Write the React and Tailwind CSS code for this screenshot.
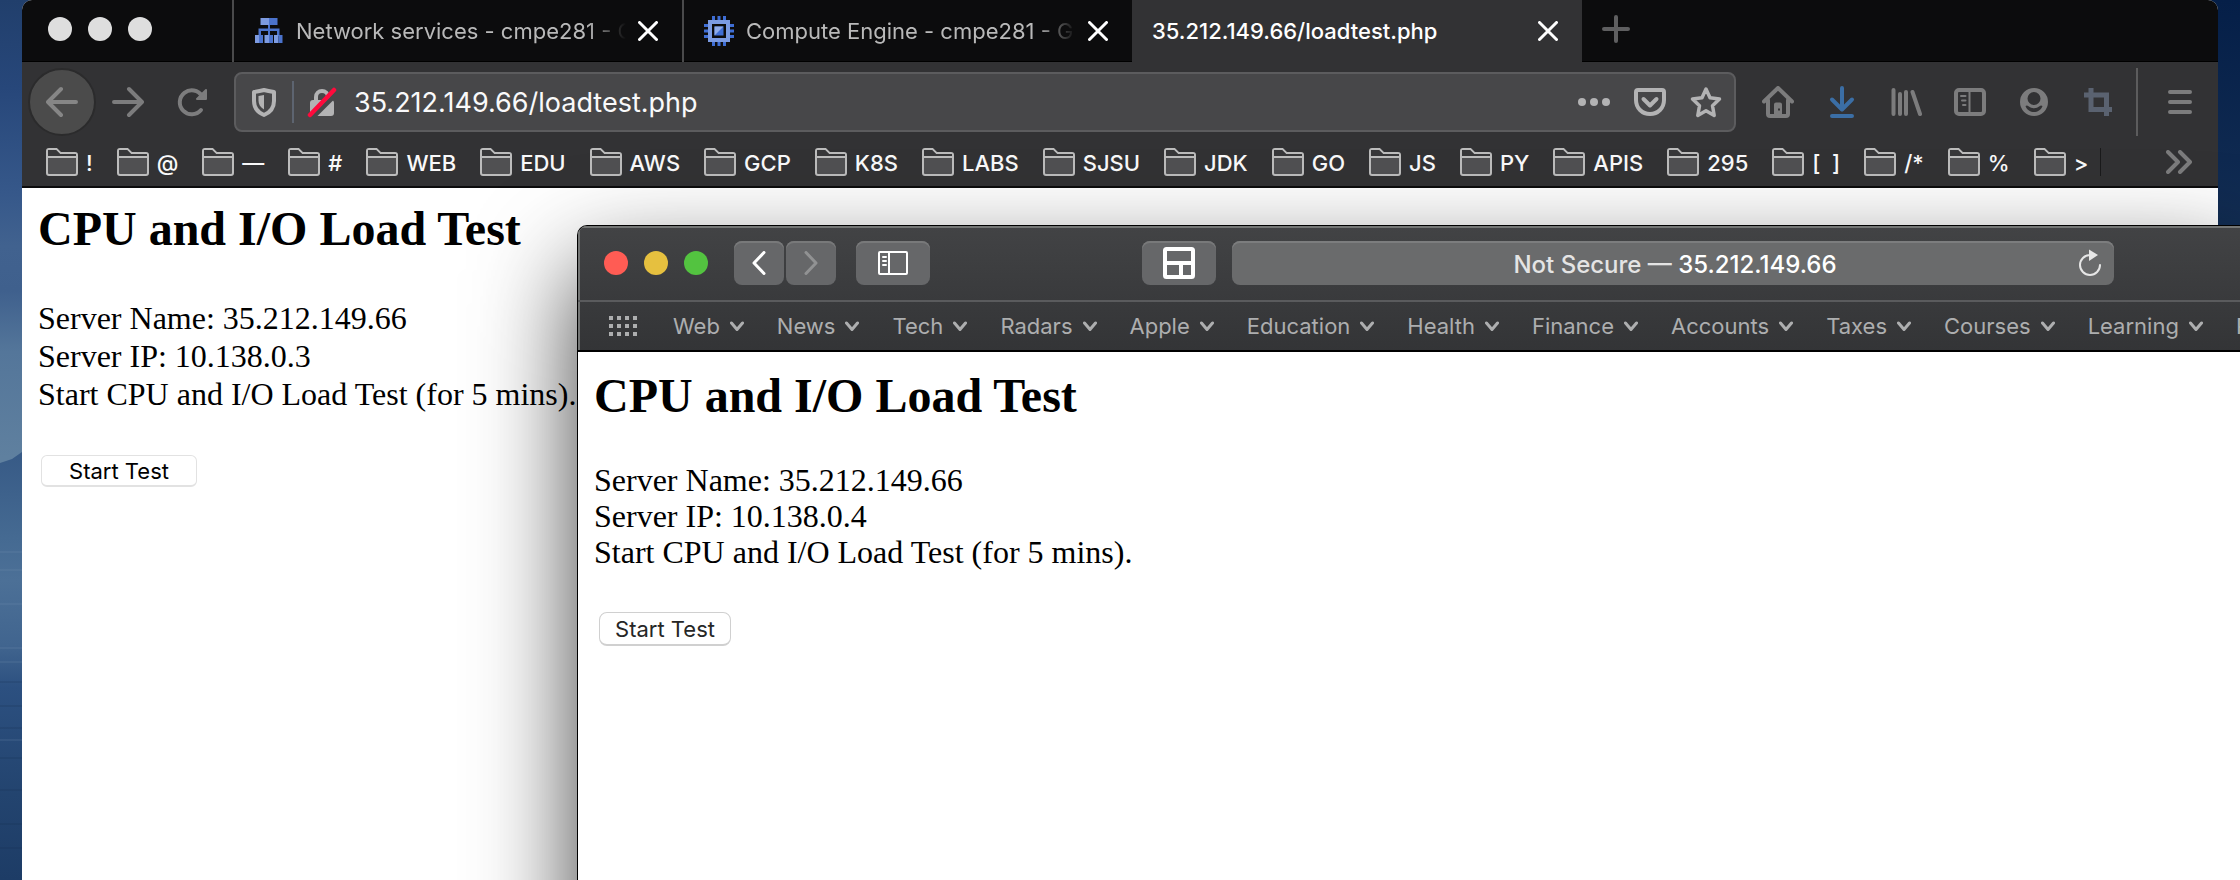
const bookmarks = [
  "!", "@", "—", "#", "WEB", "EDU", "AWS", "GCP", "K8S", "LABS", "SJSU", "JDK", "GO",
  "JS", "PY", "APIS", "295", "[\u00a0\u00a0]", "/*", "%", ">",
];

const favorites = [
  "Web", "News", "Tech", "Radars", "Apple", "Education", "Health", "Finance",
  "Accounts", "Taxes", "Courses", "Learning", "R",
];

const round = { fill: "none", stroke: "currentColor", strokeLinecap: "round", strokeLinejoin: "round" };

function Icon({ children, className = "", ...rest }) {
  return (
    <svg viewBox="0 0 32 32" className={`size-8 shrink-0 ${className}`} aria-hidden="true" {...rest}>
      {children}
    </svg>
  );
}

function IconButton({ label, className = "", children }) {
  return (
    <button type="button" aria-label={label} className={`flex shrink-0 items-center justify-center ${className}`}>
      {children}
    </button>
  );
}

function NetworkIcon() {
  return (
    <svg viewBox="0 0 28 26" className="h-[26px] w-[30px] shrink-0" aria-hidden="true">
      <path d="M5.500 0H14v7H5.500z" fill="#7d9be0" />
      <path d="M14 0h8.500v7H14z" fill="#4b73cc" />
      <path d="M13 7h2v3.500h9.500V18H22v-5h-7v5h-2v-5H6v5H3.500v-7.500H13z" fill="#4b73cc" />
      <path d="M0 17h4v8H0zM9.500 17h4.500v8H9.500zM19 17h4.500v8H19z" fill="#7d9be0" />
      <path d="M4 17h4v8H4zM14 17h4v8h-4zM23.500 17h4v8h-4z" fill="#4b73cc" />
    </svg>
  );
}

function ChipIcon() {
  return (
    <svg viewBox="0 0 30 30" className="size-[30px] shrink-0" aria-hidden="true">
      <path d="M8 0h3v5H8zM13.500 0h3v5h-3zM19 0h3v5h-3zM8 25h3v5H8zM13.500 25h3v5h-3zM19 25h3v5h-3z" fill="#3f6ed4" />
      <path d="M0 8h5v3H0zM0 13.500h5v3H0zM0 19h5v3H0zM25 8h5v3h-5zM25 13.500h5v3h-5zM25 19h5v3h-5z" fill="#3f6ed4" />
      <path d="M4 4h22v22H4zM8 8v14h14V8z" fill="#7b9be2" fillRule="evenodd" />
      <path d="M10.500 10.500h9v9h-9z" fill="#3f6ed4" />
      <path d="M10.500 10.500h9l-9 9z" fill="#8fabe8" />
    </svg>
  );
}

function CloseIcon() {
  return (
    <svg viewBox="0 0 20 20" className="size-5" {...round} strokeWidth="3" aria-hidden="true">
      <path d="M1.500 1.500l17 17M18.500 1.500l-17 17" />
    </svg>
  );
}

function FolderIcon() {
  return (
    <svg viewBox="0 0 32 28" className="h-7 w-8 shrink-0" aria-hidden="true">
      <path
        d="M1 25V3a2 2 0 0 1 2-2h7.500l4 4H29a2 2 0 0 1 2 2v18a2 2 0 0 1-2 2H3a2 2 0 0 1-2-2z"
        fill="#505052"
        stroke="#bcbcbc"
        strokeWidth="2"
      />
      <path d="M2 2h8l4 4h16v3H2z" fill="#38383a" />
      <path d="M1 9h30" stroke="#bcbcbc" strokeWidth="2" />
    </svg>
  );
}

function Tab({ icon, title, active }) {
  return (
    <div
      className={
        active
          ? "flex w-[450px] items-center bg-[#323234] pr-6 pl-5 text-white"
          : "flex w-[450px] items-center gap-3 border-l-2 border-[#4a4a4b] pr-6 pl-5 text-[#b9b9b9]"
      }
    >
      {icon}
      <span
        className={
          active
            ? "flex-1 overflow-hidden whitespace-nowrap font-medium"
            : "flex-1 overflow-hidden whitespace-nowrap [mask-image:linear-gradient(to_right,#000_88%,transparent)]"
        }
      >
        {title}
      </span>
      <IconButton label="Close tab" className="text-white">
        <CloseIcon />
      </IconButton>
    </div>
  );
}

function Wallpaper() {
  return (
    <svg
      viewBox="0 0 2240 880"
      preserveAspectRatio="none"
      className="absolute inset-0 size-full"
      aria-hidden="true"
    >
      <defs>
        <linearGradient id="sky" x1="0" y1="0" x2="0" y2="1">
          <stop offset="0" stopColor="#213f6c" />
          <stop offset="0.1" stopColor="#27477a" />
          <stop offset="0.22" stopColor="#36588a" />
          <stop offset="0.28" stopColor="#41628f" />
          <stop offset="0.33" stopColor="#3f608d" />
          <stop offset="0.4" stopColor="#54769a" />
          <stop offset="0.52" stopColor="#5f809f" />
        </linearGradient>
        <linearGradient id="sea" x1="0" y1="0" x2="0" y2="1">
          <stop offset="0" stopColor="#375a86" />
          <stop offset="0.2" stopColor="#456a92" />
          <stop offset="0.3" stopColor="#4c7097" />
          <stop offset="0.45" stopColor="#41658f" />
          <stop offset="0.55" stopColor="#2c5080" />
          <stop offset="0.8" stopColor="#23446f" />
          <stop offset="1" stopColor="#1d3c66" />
        </linearGradient>
        <linearGradient id="dusk" x1="0" y1="0" x2="0" y2="1">
          <stop offset="0" stopColor="#051f48" />
          <stop offset="1" stopColor="#132e54" />
        </linearGradient>
      </defs>
      <rect width="1120" height="880" fill="url(#sky)" />
      <path d="M0 463L12 459L22 452H1120V880H0z" fill="url(#sea)" />
      <rect x="1120" width="1120" height="240" fill="url(#dusk)" />
      <g stroke="#7c9cb8" strokeOpacity="0.14" strokeWidth="2">
        <path d="M0 552h22M0 570h22M0 604h22M0 648h22M0 662h22M0 740h22" />
      </g>
      <g stroke="#11294b" strokeOpacity="0.16" strokeWidth="2">
        <path d="M0 682h22M0 706h22M0 728h22M0 758h22M0 790h22M0 824h22M0 848h22" />
      </g>
    </svg>
  );
}

function FirefoxWindow() {
  return (
    <section className="relative mx-[22px] flex flex-1 flex-col overflow-hidden rounded-t-[10px] bg-white">
      <div className="flex h-[62px] bg-[#0c0c0d] text-[22px] leading-7 shadow-[inset_0_-1px_0_#000]">
        <div className="flex w-[210px] items-center gap-4 pb-1 pl-[26px]">
          <button type="button" aria-label="Close" className="size-6 rounded-full bg-[#dedede]" />
          <button type="button" aria-label="Minimize" className="size-6 rounded-full bg-[#dedede]" />
          <button type="button" aria-label="Zoom" className="size-6 rounded-full bg-[#dedede]" />
        </div>
        <Tab icon={<NetworkIcon />} title="Network services - cmpe281 - G" />
        <Tab icon={<ChipIcon />} title="Compute Engine - cmpe281 - G" />
        <Tab title="35.212.149.66/loadtest.php" active />
        <IconButton label="New tab" className="pb-1 pl-5 text-[#5f5f60]">
          <svg viewBox="0 0 28 28" className="size-7" {...round} strokeWidth="4" aria-hidden="true">
            <path d="M14 2v24M2 14h24" />
          </svg>
        </IconButton>
      </div>

      <div className="flex h-20 items-center bg-[#323234] pr-[22px] pl-1.5 text-[#7c7c7d]">
        <IconButton label="Back" className="size-[68px] rounded-full border-2 border-[#2b2b2c] bg-[#4b4b4b] text-[#868686]">
          <Icon {...round} strokeWidth="4">
            <path d="M30 16H3M15 3L2 16l13 13" />
          </Icon>
        </IconButton>
        <IconButton label="Forward" className="ml-4">
          <Icon {...round} strokeWidth="4">
            <path d="M2 16h27M17 3l13 13-13 13" />
          </Icon>
        </IconButton>
        <IconButton label="Reload" className="ml-8">
          <Icon {...round} strokeWidth="4">
            <path d="M25 24a12 12 0 1 1 1-14" />
            <path d="M30 4v9h-9z" fill="currentColor" strokeWidth="2" />
          </Icon>
        </IconButton>

        <div className="ml-[26px] flex h-[60px] flex-1 items-center rounded-lg border-2 border-[#5c5c5e] bg-[#474749] px-3 text-[#b3b3b4]">
          <IconButton label="Tracking protection">
            <Icon>
              <path
                d="M16 4c4 1 7 1.500 10 2v9c0 7-4 11.500-10 14C10 26.500 6 22 6 15V6c3-.5 6-1 10-2z"
                fill="none"
                stroke="currentColor"
                strokeWidth="4"
                strokeLinejoin="round"
              />
              <path d="M16 9v14.500c-4-2.500-5.500-5.500-5.500-9V10z" fill="currentColor" />
            </Icon>
          </IconButton>
          <span className="ml-3 h-[42px] w-0.5 bg-[#5d6470]" />
          <IconButton label="Connection not secure" className="ml-3">
            <Icon>
              <path d="M10 15v-4a6 6 0 0 1 12 0v4" fill="none" stroke="currentColor" strokeWidth="4" />
              <rect x="4" y="14" width="24" height="16" rx="3" fill="currentColor" />
              <path d="M7 31L31 7" stroke="#474749" strokeWidth="5" />
              <path d="M4 29L28 4" stroke="#ff0a3c" strokeWidth="4.500" strokeLinecap="round" />
            </Icon>
          </IconButton>
          <input
            type="text"
            aria-label="Address"
            defaultValue="35.212.149.66/loadtest.php"
            className="ml-4 min-w-0 flex-1 bg-transparent pt-0.5 text-[27px] leading-8 text-[#f9f9fa] outline-none"
          />
          <div className="flex gap-6">
            <IconButton label="Page actions">
              <Icon fill="currentColor">
                <circle cx="4" cy="16" r="4" />
                <circle cx="16" cy="16" r="4" />
                <circle cx="28" cy="16" r="4" />
              </Icon>
            </IconButton>
            <IconButton label="Save to Pocket">
              <Icon {...round} strokeWidth="4">
                <path d="M4 4h24a2 2 0 0 1 2 2v8c0 8-6 14-14 14S2 22 2 14V6a2 2 0 0 1 2-2z" />
                <path d="M9.500 13l6.500 6.500 6.500-6.500" />
              </Icon>
            </IconButton>
            <IconButton label="Bookmark this page">
              <Icon {...round} strokeWidth="3.500">
                <path d="M16 3l4 8.800 9.500 1.200-7 6.700 1.700 9.800L16 24.800 7.800 29.500l1.700-9.800-7-6.700L12 11.800z" />
              </Icon>
            </IconButton>
          </div>
        </div>

        <div className="ml-[26px] flex items-center gap-8">
          <IconButton label="Home">
            <Icon {...round} strokeWidth="4">
              <path d="M2 15.500L16 2l14 13.500" />
              <path d="M6 14v14a2 2 0 0 0 2 2h16a2 2 0 0 0 2-2V14" />
              <path
                d="M12 30V18.500a2 2 0 0 1 2-2h4a2 2 0 0 1 2 2V30zM16 22.500v2h2v-2z"
                fill="currentColor"
                fillRule="evenodd"
                stroke="none"
              />
            </Icon>
          </IconButton>
          <IconButton label="Downloads" className="text-[#3b6ea5]">
            <Icon {...round} strokeWidth="4">
              <path d="M16 2v20M6 13.500L16 23.500l10-10M6 30h20" />
            </Icon>
          </IconButton>
          <IconButton label="Library">
            <Icon {...round} strokeWidth="4">
              <path d="M3.500 4v24M10 8v20M16 6v22M22.500 6L30 28" />
            </Icon>
          </IconButton>
          <IconButton label="Sidebars">
            <Icon {...round} strokeWidth="4">
              <rect x="2" y="4" width="28" height="24" rx="3" />
              <path d="M15.500 5v22" strokeWidth="2" />
              <path d="M7 10h4.500M8 14.500h3.500M9 19h2.500" strokeWidth="2" />
            </Icon>
          </IconButton>
          <IconButton label="Account">
            <Icon>
              <path
                fill="currentColor"
                fillRule="evenodd"
                d="M16 2a14 14 0 1 0 0 28a14 14 0 1 0 0-28zM16 6a6.500 6.500 0 0 1 0 13a6.500 6.500 0 0 1 0-13zM7.500 20c1-.8 2-.7 3 .2 3 2.600 8 2.600 11 0 1-.9 2-1 3-.2-1.500 4-5 6-8.500 6s-7-2-8.500-6z"
              />
            </Icon>
          </IconButton>
          <IconButton label="Screenshot" className="text-[#5a6270]">
            <Icon fill="none" stroke="currentColor" strokeWidth="5">
              <path d="M2 9h22.500v21M9 2v21.500h21" />
            </Icon>
          </IconButton>
        </div>
        <span className="ml-[22px] h-[68px] w-0.5 bg-[#5c5c5d]" />
        <IconButton label="Open menu" className="ml-[26px]">
          <Icon {...round} strokeWidth="4">
            <path d="M6 6h20M6 16h20M6 26h20" />
          </Icon>
        </IconButton>
      </div>

      <nav className="flex h-[46px] items-center border-b-2 border-[#0c0c0d] bg-[#323234] pr-[26px] pb-1 pl-6">
        <ul className="flex gap-6">
          {bookmarks.map((name) => (
            <li key={name}>
              <a href="#" className="flex items-center gap-2 text-[22px] leading-7 font-medium whitespace-nowrap text-[#f9f9fa]">
                <FolderIcon />
                <span className="pt-0.5">{name}</span>
              </a>
            </li>
          ))}
        </ul>
        <span className="ml-3 h-7 w-px bg-[#1a1a1b]" />
        <IconButton label="More bookmarks" className="ml-auto text-[#7c7c7d]">
          <svg viewBox="0 0 26 24" className="h-6 w-[26px]" {...round} strokeWidth="4" aria-hidden="true">
            <path d="M2 2l10 10L2 22M14 2l10 10-10 10" />
          </svg>
        </IconButton>
      </nav>

      <article className="px-4 pt-[13px] font-['Liberation_Serif',serif] text-[32px] leading-[38px] text-black">
        <h2 className="mb-[42px] text-5xl leading-[56px] font-bold">CPU and I/O Load Test</h2>
        <p>Server Name: 35.212.149.66</p>
        <p>Server IP: 10.138.0.3</p>
        <p>Start CPU and I/O Load Test (for 5 mins).</p>
        <button
          type="button"
          className="mt-[42px] ml-[3px] flex h-8 w-[156px] items-center justify-center rounded-md border border-b-2 border-[#e2e2e2] bg-white font-['Inter',sans-serif] text-[22px] leading-7"
        >
          Start Test
        </button>
      </article>
    </section>
  );
}

const safariButton =
  "flex h-11 shrink-0 items-center justify-center rounded-lg bg-[#666769] shadow-[inset_0_2px_0_#78797a]";

function SafariWindow() {
  return (
    <section className="absolute top-[225px] right-0 -bottom-[200px] left-[577px] flex flex-col overflow-hidden rounded-tl-[10px] border-t border-l border-black bg-white shadow-[0_44px_100px_rgba(0,0,0,0.75)]">
      <div className="bg-linear-to-b from-[#424345] to-[#333436] shadow-[inset_2px_2px_0_#747675]">
        <div className="flex h-[76px] items-center border-b-2 border-[#5a5b5d] pr-[126px] pl-[26px]">
          <div className="flex gap-4">
            <button type="button" aria-label="Close" className="size-6 rounded-full bg-[#ff5c54]" />
            <button type="button" aria-label="Minimize" className="size-6 rounded-full bg-[#e6c03f]" />
            <button type="button" aria-label="Zoom" className="size-6 rounded-full bg-[#53c340]" />
          </div>
          <div className="ml-[26px] flex gap-0.5">
            <button type="button" aria-label="Back" className={`${safariButton} w-[50px] text-white`}>
              <svg viewBox="0 0 14 24" className="h-6 w-3.5" {...round} strokeWidth="3" aria-hidden="true">
                <path d="M12 1.500L2 12l10 10.500" />
              </svg>
            </button>
            <button type="button" aria-label="Forward" className={`${safariButton} w-[50px] text-[#919293]`}>
              <svg viewBox="0 0 14 24" className="h-6 w-3.5" {...round} strokeWidth="3" aria-hidden="true">
                <path d="M2 1.500L12 12 2 22.500" />
              </svg>
            </button>
          </div>
          <button type="button" aria-label="Show sidebar" className={`${safariButton} ml-5 w-[74px] text-white`}>
            <svg viewBox="0 0 30 24" className="h-6 w-[30px]" {...round} strokeWidth="2" aria-hidden="true">
              <rect x="1" y="1" width="28" height="22" rx="1" />
              <path d="M11 1v22M5 6h3M5 10h3M5 14h3" />
            </svg>
          </button>
          <button type="button" aria-label="Layout extension" className={`${safariButton} ml-[212px] w-[74px] text-white`}>
            <svg viewBox="0 0 32 32" className="size-8" {...round} strokeWidth="4" aria-hidden="true">
              <rect x="2" y="2" width="28" height="28" rx="1.500" />
              <path d="M2 16h28M18 16v14" />
            </svg>
          </button>
          <div className="ml-4 flex h-11 flex-1 items-center rounded-lg bg-[#6a6b6c] pr-3 pl-10 shadow-[inset_0_2px_0_#7c7d7e]">
            <p className="flex-1 pt-1 text-center text-2xl leading-8 font-medium text-[#e4e4e4]">
              Not Secure — <span className="text-white">35.212.149.66</span>
            </p>
            <IconButton label="Reload page" className="text-[#e6e6e6]">
              <svg viewBox="0 0 24 28" className="h-7 w-6" aria-hidden="true">
                <path d="M12 6a10 10 0 1 0 10 10" fill="none" stroke="currentColor" strokeWidth="2" strokeLinecap="round" />
                <path d="M11 0.500l9 5.500-9 6z" fill="currentColor" />
              </svg>
            </IconButton>
          </div>
        </div>
        <nav className="flex h-[50px] items-center gap-[33px] border-b-2 border-black pl-[31px] text-[#adaeaf]">
          <IconButton label="Show favorites" className="mr-[3px]">
            <svg viewBox="0 0 28 20" className="h-5 w-7" fill="currentColor" aria-hidden="true">
              <path d="M0 0h4v4H0zM8 0h4v4H8zM16 0h4v4h-4zM24 0h4v4h-4zM0 8h4v4H0zM8 8h4v4H8zM16 8h4v4h-4zM24 8h4v4h-4zM0 16h4v4H0zM8 16h4v4H8zM16 16h4v4h-4zM24 16h4v4h-4z" />
            </svg>
          </IconButton>
          {favorites.map((name) => (
            <button key={name} type="button" className="flex shrink-0 items-center gap-2.5 text-[22px] leading-7">
              {name}
              <svg viewBox="0 0 14 12" className="h-3 w-3.5" {...round} strokeWidth="3" aria-hidden="true">
                <path d="M1.500 3L7 9.500 12.500 3" />
              </svg>
            </button>
          ))}
        </nav>
      </div>

      <article className="px-4 pt-4 font-['Liberation_Serif',serif] text-[32px] leading-9 text-black">
        <h2 className="mb-[38px] text-5xl leading-[56px] font-bold">CPU and I/O Load Test</h2>
        <p>Server Name: 35.212.149.66</p>
        <p>Server IP: 10.138.0.4</p>
        <p>Start CPU and I/O Load Test (for 5 mins).</p>
        <button
          type="button"
          className="mt-[42px] ml-[5px] flex h-[34px] w-[132px] items-center justify-center rounded-lg border border-b-2 border-[#d0d0d0] bg-white font-['Inter',sans-serif] text-[22px] leading-7 text-[#262626]"
        >
          Start Test
        </button>
      </article>
    </section>
  );
}

export default function App() {
  return (
    <main className="relative flex min-h-screen overflow-hidden font-['Inter',sans-serif]">
      <Wallpaper />
      <FirefoxWindow />
      <SafariWindow />
    </main>
  );
}
